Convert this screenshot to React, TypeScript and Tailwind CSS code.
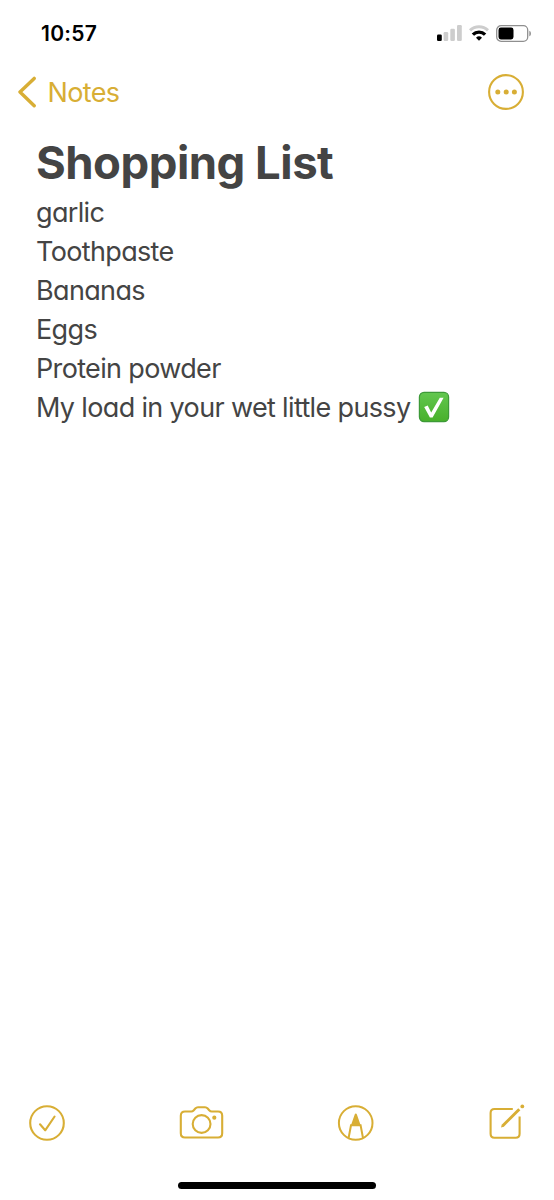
const items = ["garlic", "Toothpaste", "Bananas", "Eggs", "Protein powder"];

const StatusBar = () => {
  return (
    <div className="flex h-[66px] shrink-0 items-center justify-between pl-[41px] pr-[22px] text-black">
      <div className="pt-[2px] text-[21px] font-semibold tracking-[0.3px]">10:57</div>
      <div className="flex items-center">
        <svg className="mr-[7px] h-4 w-[25px]" viewBox="0 0 25 16">
          <rect x="0" y="9.6" width="4.8" height="6.4" rx="1.2" fill="#000" />
          <g fill="#cdcdcd">
            <rect x="6.6" y="7" width="4.6" height="9" rx="1.2" />
            <rect x="13.3" y="3.8" width="4.6" height="12.2" rx="1.2" />
            <rect x="20" y="0" width="4.8" height="16" rx="1.2" />
          </g>
        </svg>
        <svg className="mr-[7px] h-4 w-5" viewBox="0 0 20 16" fill="none">
          <path d="M1 5.4a12.9 12.9 0 0 1 18 0" stroke="#cdcdcd" strokeWidth="3" />
          <path d="M3.9 9.6a8.6 8.6 0 0 1 12.2 0" stroke="#000" strokeWidth="3.3" />
          <path d="M7 12.7a4.3 4.3 0 0 1 6 0L10 15.7z" fill="#000" />
        </svg>
        <svg className="h-[17px] w-9" viewBox="0 0 36 17" fill="none">
          <rect x="0.7" y="0.7" width="31" height="15.6" rx="4.4" stroke="#8f8f8f" strokeWidth="1.3" />
          <rect x="2.5" y="2.6" width="15" height="11.8" rx="2.4" fill="#000" />
          <path d="M33.3 5.7c2.2.8 2.2 4.8 0 5.6z" fill="#8f8f8f" />
        </svg>
      </div>
    </div>
  );
};

const Header = () => {
  return (
    <header className="flex h-[52px] shrink-0 items-center justify-between pl-[17px] pr-[29px] text-[#d8ae35]">
      <button className="flex items-center">
        <svg className="mr-[10.5px] h-8 w-5" viewBox="0 0 20 32" fill="none" stroke="currentColor" strokeWidth="3.4" strokeLinecap="round" strokeLinejoin="round">
          <path d="M17.2 2.4 3 16l14.2 13.8" />
        </svg>
        <span className="pt-[2px] text-[27px] font-normal tracking-[-0.65px]">Notes</span>
      </button>
      <svg className="h-[38px] w-[38px]" viewBox="0 0 38 38" fill="none">
        <circle cx="19" cy="19" r="16.9" stroke="currentColor" strokeWidth="2.1" />
        <g fill="currentColor">
          <circle cx="10.8" cy="19" r="2.5" />
          <circle cx="19.2" cy="19" r="2.5" />
          <circle cx="27.4" cy="19" r="2.5" />
        </g>
      </svg>
    </header>
  );
};

const CheckEmoji = () => {
  return (
    <svg className="mb-[2px] ml-[8px] h-8 w-8" viewBox="0 0 32 32">
      <defs>
        <linearGradient id="green" x1="0" y1="0" x2="0" y2="1">
          <stop offset="0" stopColor="#62c74f" />
          <stop offset="1" stopColor="#48b02b" />
        </linearGradient>
      </defs>
      <rect x="1.4" y="1.4" width="29.2" height="29.2" rx="4.6" fill="url(#green)" stroke="#3d9a38" strokeWidth="1.2" />
      <path d="M6.2 16 9.7 14.6 13.2 21.4 21.8 6.8H25.6L14.6 26.4H11.9z" fill="#fff" />
    </svg>
  );
};

const Toolbar = () => {
  return (
    <footer className="flex h-[38px] shrink-0 items-center justify-between px-[28px] text-[#d8ae35]">
      <svg className="h-[38px] w-[38px]" viewBox="0 0 38 38" fill="none" stroke="currentColor" strokeWidth="2.1" strokeLinecap="round" strokeLinejoin="round">
        <circle cx="19" cy="19" r="16.8" />
        <path d="m12 20.3 5.2 6 9.4-13.8" />
      </svg>
      <svg className="h-[38px] w-[46px]" viewBox="0 0 46 38" fill="none" stroke="currentColor" strokeWidth="2.1" strokeLinejoin="round">
        <path d="M6 7.500h6.200c1.200 0 1.800-.4 2.600-1.300l1.500-1.700c.8-.9 1.500-1.200 2.700-1.200h7c1.200 0 1.900.3 2.700 1.200l1.500 1.700c.8.9 1.400 1.300 2.600 1.300h6.200c2.700 0 4.200 1.500 4.200 4.200v17.600c0 2.700-1.500 4.200-4.200 4.200h-33c-2.700 0-4.200-1.500-4.200-4.200V11.700c0-2.700 1.500-4.200 4.200-4.200z" />
        <circle cx="22.6" cy="20" r="8.9" />
        <circle cx="35.3" cy="13.7" r="2.1" fill="currentColor" stroke="none" />
      </svg>
      <svg className="h-[38px] w-[38px]" viewBox="0 0 38 38" fill="none" stroke="currentColor" strokeWidth="2">
        <circle cx="18.7" cy="19" r="16.8" />
        <path d="M11.6 34 14 21.3h9.6L26 34" />
        <path d="M13.7 22 17.7 10.4c.4-1.2 1.8-1.2 2.2 0L23.9 22z" fill="currentColor" stroke="none" />
      </svg>
      <svg className="h-[38px] w-[38px]" viewBox="0 0 38 38" fill="none" stroke="currentColor" strokeWidth="2.1">
        <path d="M24.8 5H6.4C4 5 2.6 6.500 2.6 9v20.7c0 2.5 1.4 4 3.8 4h21.3c2.5 0 3.9-1.5 3.9-4V12.5" />
        <path d="M14.5 22 31.3 5.2" strokeWidth="3" />
        <path d="m13 23.5.8-2.8 2 2z" fill="currentColor" stroke="none" />
        <circle cx="34.3" cy="2.4" r="1.9" fill="currentColor" stroke="none" />
      </svg>
    </footer>
  );
};

const App = () => {
  return (
    <div className="flex h-[1200px] w-[554px] flex-col bg-white font-['Inter',sans-serif]">
      <StatusBar />
      <Header />
      <main className="grow pl-[36px] pt-[17px] text-[#444444]">
        <h1 className="mb-[2px] text-[45.5px] leading-[56px] font-bold tracking-[-0.5px]">Shopping List</h1>
        <div className="text-[27px] leading-[39px] tracking-[-0.65px] [font-feature-settings:'cv11']">
          {items.map((item) => (
            <p key={item}>{item}</p>
          ))}
          <p className="flex items-center whitespace-nowrap">
            My load in your wet little pussy
            <CheckEmoji />
          </p>
        </div>
      </main>
      <Toolbar />
      <div className="flex h-[58px] shrink-0 justify-center pt-[40px]">
        <div className="h-[7px] w-[198px] rounded-full bg-black" />
      </div>
    </div>
  );
};

export default App;
